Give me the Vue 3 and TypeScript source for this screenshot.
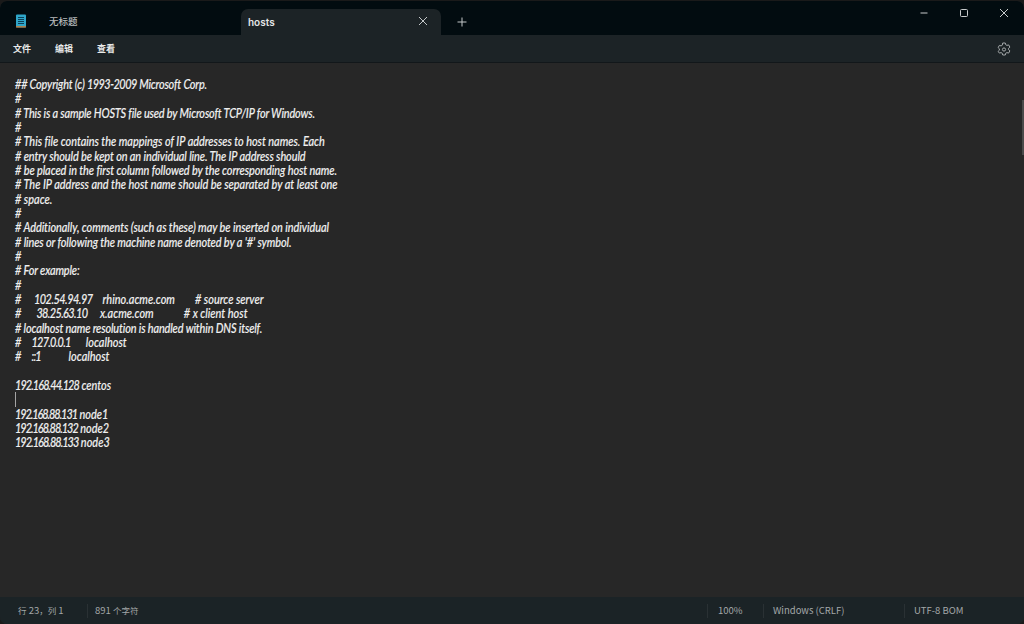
<script setup lang="ts">
interface Row {
  text: string
  fit?: number
  num?: number
}
interface Part {
  text: string
  isNum: boolean
}

const rows: Row[] = [
  { text: '## Copyright (c) 1993-2009 Microsoft Corp.', fit: -0.22, num: -0.6 },
  { text: '#' },
  { text: '# This is a sample HOSTS file used by Microsoft TCP/IP for Windows.', fit: -0.195 },
  { text: '#' },
  { text: '# This file contains the mappings of IP addresses to host names. Each', fit: -0.03 },
  { text: '# entry should be kept on an individual line. The IP address should', fit: -0.12 },
  { text: '# be placed in the first column followed by the corresponding host name.', fit: -0.1 },
  { text: '# The IP address and the host name should be separated by at least one', fit: -0.02 },
  { text: '# space.' },
  { text: '#' },
  { text: '# Additionally, comments (such as these) may be inserted on individual', fit: -0.08 },
  { text: "# lines or following the machine name denoted by a '#' symbol.", fit: -0.12 },
  { text: '#' },
  { text: '# For example:', fit: -0.17 },
  { text: '#' },
  { text: '#     102.54.94.97    rhino.acme.com        # source server', num: -0.6 },
  { text: '#      38.25.63.10     x.acme.com            # x client host', num: -0.75 },
  { text: '# localhost name resolution is handled within DNS itself.', fit: -0.17 },
  { text: '#    127.0.0.1      localhost', num: -0.85 },
  { text: '#    ::1           localhost', num: -0.9 },
  { text: '' },
  { text: '192.168.44.128 centos', num: -1.1 },
  { text: '' },
  { text: '192.168.88.131 node1', num: -1.27 },
  { text: '192.168.88.132 node2', num: -1.2 },
  { text: '192.168.88.133 node3', num: -1.15 },
]

function partsOf(text: string): Part[] {
  return text
    .split(/(\d[\d.\-]*\d|::1)/)
    .filter((s) => s !== '')
    .map((s) => ({ text: s, isNum: /^(\d[\d.\-]*\d|::1)$/.test(s) }))
}

const menus: string[] = ['文件', '编辑', '查看']
</script>

<template>
  <div class="window">
    <header class="titlebar">
      <div class="tab tab-idle">
        <svg class="app-icon" width="12" height="14" viewBox="0 0 12 14">
          <rect x="1" y="0.5" width="10" height="13" rx="1" fill="#2fa6c9" />
          <rect x="1" y="12.2" width="10" height="1.3" fill="#c9772f" />
          <path d="M3 3.5h6M3 5.5h6M3 7.5h6M3 9.5h6" stroke="#0c3f57" stroke-width="1" />
        </svg>
        <span class="tab-title">无标题</span>
      </div>
      <div class="tab tab-active">
        <span class="tab-name">hosts</span>
        <svg class="tab-close" width="10" height="10" viewBox="0 0 10 10">
          <path d="M1 1l8 8M9 1l-8 8" stroke="#c4c8c9" stroke-width="1" fill="none" />
        </svg>
      </div>
      <svg class="tab-add" width="10" height="10" viewBox="0 0 10 10">
        <path d="M5 .5v9M.5 5h9" stroke="#c4c8c9" stroke-width="1" fill="none" />
      </svg>
      <div class="controls">
        <svg width="10" height="10" viewBox="0 0 10 10"><path d="M1.500 5h7" stroke="#c8cbcc" stroke-width="1" /></svg>
        <svg width="10" height="10" viewBox="0 0 10 10"><rect x="1.500" y="1.500" width="7" height="7" rx="1" stroke="#c8cbcc" stroke-width="1" fill="none" /></svg>
        <svg width="10" height="10" viewBox="0 0 10 10"><path d="M1 1l8 8M9 1l-8 8" stroke="#c8cbcc" stroke-width="1" fill="none" /></svg>
      </div>
    </header>
    <nav class="menubar">
      <span v-for="m in menus" :key="m" class="menu">{{ m }}</span>
      <svg class="gear" width="14" height="14" viewBox="0 0 14 14">
        <path d="M5.700 1h2.600l.4 1.700 1.200.7 1.700-.5 1.300 2.200-1.300 1.200v1.400l1.300 1.200-1.300 2.200-1.700-.5-1.200.7-.4 1.700H5.700l-.4-1.700-1.200-.7-1.700.5L1.100 9.400l1.300-1.200V6.800L1.100 5.600l1.300-2.200 1.700.5 1.200-.7z" fill="none" stroke="#a5a9aa" stroke-width="1" stroke-linejoin="round" />
        <circle cx="7" cy="7.500" r="1.600" fill="none" stroke="#a5a9aa" stroke-width="1" />
      </svg>
    </nav>
    <main class="editor">
      <pre class="text"><span
        v-for="(r, i) in rows"
        :key="i"
        class="line"
        :style="{ letterSpacing: (r.fit ?? 0) + 'px' }"
      ><span
          v-for="(p, j) in partsOf(r.text)"
          :key="j"
          :style="p.isNum ? { letterSpacing: (r.num ?? 0) + 'px' } : undefined"
        >{{ p.text }}</span><i v-if="i === 22" class="caret"></i></span></pre>
      <div class="scroll-thumb"></div>
    </main>
    <footer class="statusbar">
      <span class="cell cell-pos"><span class="cjk">行</span>&nbsp;23<span class="cjk">，列</span>&nbsp;1</span>
      <span class="cell cell-count">891&nbsp;<span class="cjk">个字符</span></span>
      <span class="spacer"></span>
      <span class="cell cell-zoom">100%</span>
      <span class="cell cell-eol">Windows (CRLF)</span>
      <span class="cell cell-enc">UTF-8 BOM</span>
    </footer>
  </div>
</template>

<style>
html, body { margin: 0; background: #1a1a1a; }
</style>

<style scoped>
.window {
  width: 1024px;
  height: 623px;
  margin-top: 1px;
  display: flex;
  flex-direction: column;
  overflow: hidden;
  border-radius: 7px;
  background: #272727;
  font-family: "Noto Sans CJK SC", "Noto Sans", sans-serif;
}
.titlebar {
  height: 34px;
  flex: none;
  display: flex;
  align-items: flex-end;
  background: #020c10;
}
.tab {
  height: 26px;
  display: flex;
  align-items: center;
  box-sizing: border-box;
}
.tab-idle { width: 241px; padding-left: 15px; height: 34px; padding-top: 6px; }
.app-icon { flex: none; }
.tab-title { margin-left: 22px; font-size: 9.500px; color: #b6b9ba; font-weight: 500; }
.tab-active {
  width: 200px;
  padding: 0 13px 0 7px;
  justify-content: space-between;
  background: #1c2326;
  border-radius: 7px 7px 0 0;
}
.tab-name {
  font-family: "Inter", sans-serif;
  font-size: 10px;
  font-weight: 600;
  color: #e4e6e6;
  margin-top: -1px;
}
.tab-close { margin-top: -2px; }
.tab-add { margin: 0 0 8px 16px; }
.controls {
  margin-left: auto;
  height: 100%;
  box-sizing: border-box;
  padding: 7px 15px 0 0;
  display: flex;
  gap: 30px;
  align-items: flex-start;
}
.menubar {
  height: 28px;
  flex: none;
  display: flex;
  align-items: center;
  gap: 24px;
  padding: 0 13px;
  background: #1c2326;
  border-bottom: 1px solid #12171a;
  box-sizing: border-box;
}
.menu { font-size: 9px; font-weight: 700; color: #e8e9e9; line-height: 1; }
.gear { margin-left: auto; }
.editor {
  flex: 1;
  position: relative;
  min-height: 0;
  background: #272727;
}
.text {
  margin: 0;
  padding: 14px 0 0 15px;
  font-family: "Lato", sans-serif;
  font-style: italic;
  font-weight: 500;
  font-size: 13px;
  line-height: 14.33px;
  color: #f0f0f0;
  -webkit-text-stroke: 0.15px #f0f0f0;
  white-space: pre;
  transform: scaleX(0.84);
  transform-origin: 15px 0;
}
.line { display: block; height: 14.33px; position: relative; }
.caret {
  display: inline-block;
  width: 1px;
  height: 15px;
  background: #bdbdbd;
  vertical-align: top;
}
.scroll-thumb {
  position: absolute;
  top: 37px;
  right: 0;
  width: 2px;
  height: 55px;
  background: #4a4a4a;
}
.statusbar {
  height: 27px;
  flex: none;
  display: flex;
  align-items: center;
  background: #1b2326;
  font-size: 9.500px;
  color: #a3a7a8;
}
.cell {
  height: 14px;
  display: flex;
  align-items: center;
  box-sizing: border-box;
  line-height: 1;
}
.cjk { font-size: 8.500px; }
.cell-pos { width: 87px; padding-left: 18px; }
.cell-count { padding-left: 7px; border-left: 1px solid #2a3134; }
.spacer { flex: 1; }
.cell-zoom { width: 56px; padding-left: 10px; border-left: 1px solid #2a3134; }
.cell-eol { width: 141px; padding-left: 9px; border-left: 1px solid #2a3134; }
.cell-enc { width: 120px; padding-left: 9px; border-left: 1px solid #2a3134; }
</style>
